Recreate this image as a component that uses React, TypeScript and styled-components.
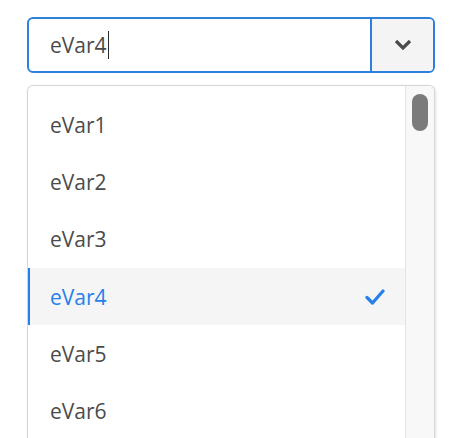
import React from 'react'
import styled, { createGlobalStyle } from 'styled-components'

const GlobalStyle = createGlobalStyle`
  html, body {
    margin: 0;
    padding: 0;
    background: #fff;
    overflow: hidden;
  }
  body {
    font-family: 'Open Sans', 'Liberation Sans', sans-serif;
  }
`

const Page = styled.div`
  width: 456px;
  height: 438px;
  padding: 17px 21px 0 27px;
  box-sizing: border-box;
  display: flex;
  flex-direction: column;
  gap: 12px;
  overflow: hidden;
`

const Combo = styled.div`
  display: flex;
  height: 56px;
  border: 2px solid #2d80dc;
  border-radius: 6px;
  box-sizing: border-box;
  overflow: hidden;
`

const Field = styled.div`
  flex: 1;
  display: flex;
  align-items: center;
  padding-left: 21px;
  font-size: 21px;
  color: #4b4b4b;
`

const Caret = styled.span`
  display: inline-block;
  width: 1.5px;
  height: 28px;
  margin-left: 1px;
  background: #2c2c2c;
`

const Toggle = styled.div`
  width: 61px;
  border-left: 2px solid #2d80dc;
  background: #f4f4f4;
  display: flex;
  align-items: center;
  justify-content: center;
`

const Popover = styled.div`
  flex: 1;
  display: flex;
  border: 1.5px solid #d6d6d6;
  border-bottom: none;
  border-radius: 6px 6px 0 0;
  box-shadow: 1px 1px 3px rgba(0, 0, 0, 0.12);
  background: #fff;
  overflow: hidden;
`

const List = styled.div`
  flex: 1;
  padding-top: 10px;
  display: flex;
  flex-direction: column;
`

const Item = styled.div<{ $selected?: boolean }>`
  height: 57.3px;
  flex-shrink: 0;
  display: flex;
  align-items: center;
  justify-content: space-between;
  padding: 0 20px 0 20px;
  box-sizing: border-box;
  font-size: 21px;
  color: ${p => (p.$selected ? '#2680eb' : '#4b4b4b')};
  background: ${p => (p.$selected ? '#f5f5f5' : 'transparent')};
  border-left: 2px solid ${p => (p.$selected ? '#2680eb' : 'transparent')};
`

const Gutter = styled.div`
  width: 28px;
  border-left: 1.5px solid #e3e3e3;
  background: #f8f8f8;
  padding-top: 8px;
  display: flex;
  justify-content: center;
`

const Thumb = styled.div`
  width: 16px;
  height: 37px;
  border-radius: 8px;
  background: #7b7b7b;
`

const items = ['eVar1', 'eVar2', 'eVar3', 'eVar4', 'eVar5', 'eVar6']

const App = () => {
  return (
    <Page>
      <GlobalStyle />
      <Combo>
        <Field>
          eVar4
          <Caret />
        </Field>
        <Toggle>
          <svg width='18' height='12' viewBox='0 0 18 12'>
            <path d='M2 2 L9 9 L16 2' fill='none' stroke='#4b4b4b' strokeWidth='3.2' />
          </svg>
        </Toggle>
      </Combo>
      <Popover>
        <List>
          {items.map(name => (
            <Item key={name} $selected={name === 'eVar4'}>
              {name}
              {name === 'eVar4' && (
                <svg width='20' height='16' viewBox='0 0 20 16'>
                  <path
                    d='M2 8.5 L7.5 14 L18 2'
                    fill='none'
                    stroke='#2680eb'
                    strokeWidth='3.2'
                    strokeLinecap='round'
                    strokeLinejoin='round'
                  />
                </svg>
              )}
            </Item>
          ))}
        </List>
        <Gutter>
          <Thumb />
        </Gutter>
      </Popover>
    </Page>
  )
}

export default App
